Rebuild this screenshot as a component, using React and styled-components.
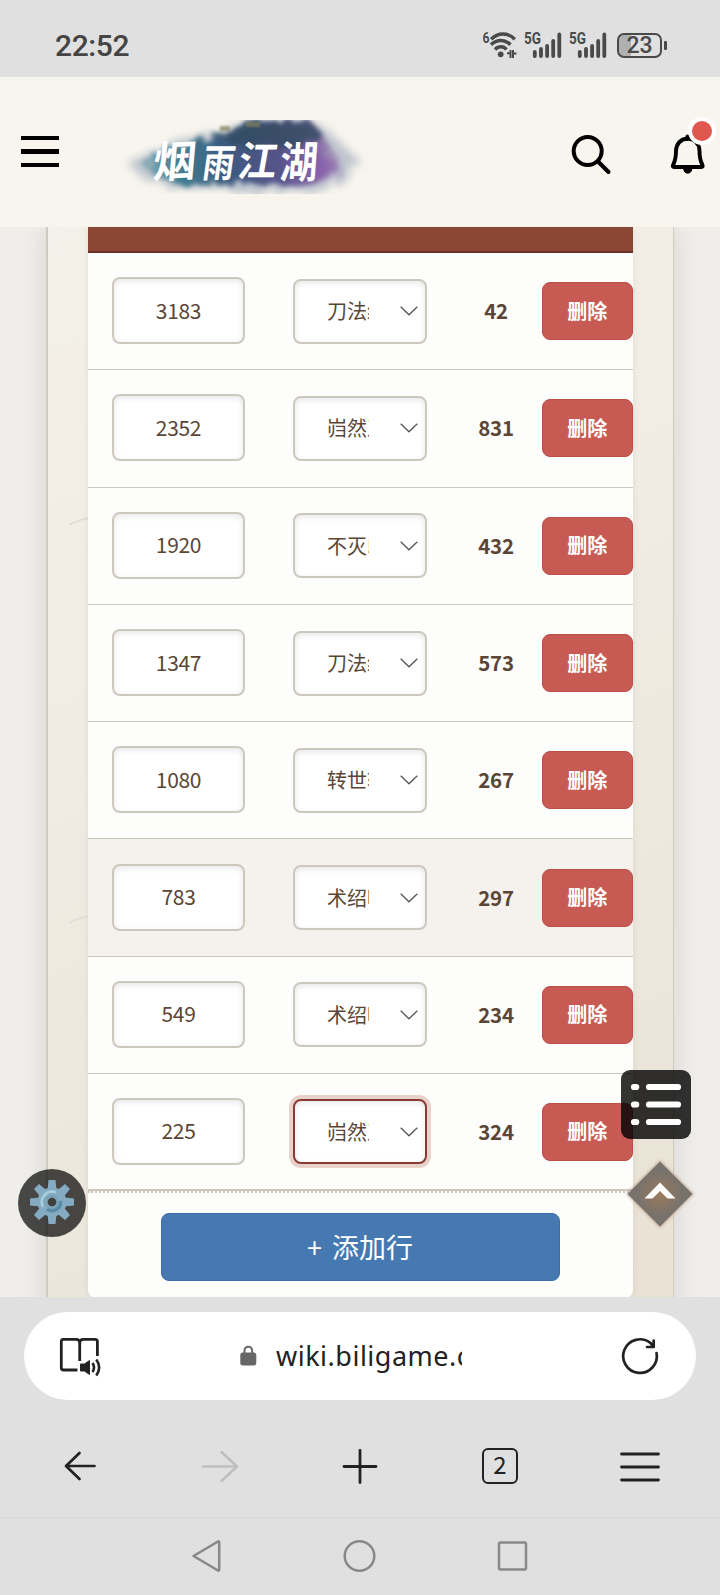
import React from 'react';
import styled, { createGlobalStyle } from 'styled-components';

const rowsData = [
  { id: 1, time: 3183, skill: '刀法绍', diff: 42 },
  { id: 2, time: 2352, skill: '岿然正', diff: 831 },
  { id: 3, time: 1920, skill: '不灭印', diff: 432 },
  { id: 4, time: 1347, skill: '刀法绍', diff: 573 },
  { id: 5, time: 1080, skill: '转世轮', diff: 267 },
  { id: 6, time: 783, skill: '术绍叩', diff: 297, active: true },
  { id: 7, time: 549, skill: '术绍叩', diff: 234 },
  { id: 8, time: 225, skill: '岿然正', diff: 324, focused: true },
];

const SignalIcon = () => (
  <svg width="38" height="28" viewBox="0 0 38 28">
    <text x="0" y="13" fontFamily="Roboto, sans-serif" fontWeight="700" fontSize="16.5" textLength="17" lengthAdjust="spacingAndGlyphs" fill="#4a4a4a">5G</text>
    <g stroke="#4a4a4a" strokeWidth="3.8" strokeLinecap="round">
      <path d="M10.8 21v4M17 18v7M23.1 15v10M29.2 10v15M35.3 3.5V25" />
    </g>
  </svg>
);

const WifiIcon = () => (
  <svg width="34" height="28" viewBox="0 0 34 28">
    <text x="-0.5" y="12" fontFamily="Roboto, sans-serif" fontWeight="700" fontSize="14.5" textLength="7" lengthAdjust="spacingAndGlyphs" fill="#4a4a4a">6</text>
    <g fill="none" stroke="#4a4a4a" strokeWidth="3.5">
      <path d="M8.2 8.2C15 1.200 25 1.200 31.800 8.200" />
      <path d="M8 13.600C14 8 21.500 8 27.500 13.600" />
      <path d="M12 18.500C15.500 14.800 20.500 14.800 23.500 18.500" />
    </g>
    <circle cx="17.700" cy="23.300" r="2.900" fill="#4a4a4a" />
    <path d="M24 22.300H27.500V19V27M30 19V27M30 22.500H33.500" fill="none" stroke="#4a4a4a" strokeWidth="2" />
  </svg>
);

const Logo = () => (
  <svg width="260" height="74" viewBox="0 0 260 74">
    <defs>
      <linearGradient id="ink" x1="0" x2="1">
        <stop offset="0" stopColor="#7fa5b4" />
        <stop offset="0.2" stopColor="#357588" />
        <stop offset="0.45" stopColor="#33517a" />
        <stop offset="0.7" stopColor="#514b86" />
        <stop offset="0.88" stopColor="#8063a3" />
        <stop offset="1" stopColor="#b1a7bd" />
      </linearGradient>
      <filter id="rough" x="-20%" y="-30%" width="140%" height="160%">
        <feTurbulence type="fractalNoise" baseFrequency="0.09" numOctaves="3" seed="4" result="n" />
        <feDisplacementMap in="SourceGraphic" in2="n" scale="16" />
        <feGaussianBlur stdDeviation="2.600" />
      </filter>
      <filter id="haze" x="-20%" y="-40%" width="140%" height="180%">
        <feTurbulence type="fractalNoise" baseFrequency="0.06" numOctaves="3" seed="8" result="n" />
        <feDisplacementMap in="SourceGraphic" in2="n" scale="20" />
        <feGaussianBlur stdDeviation="4.500" />
      </filter>
    </defs>
    <path d="M14 44L44 28L92 14L140 -2H192L218 14L234 30L248 42L226 58L200 74H140L70 68L34 62Z" fill="#8e9fb2" opacity="0.550" filter="url(#haze)" />
    <path d="M28 44L58 27L96 18L136 2H196L212 20L226 40L218 56L190 66L130 63L72 66L44 58Z" fill="url(#ink)" opacity="0.920" filter="url(#rough)" />
    <path d="M100 16L136 2H196L210 16L178 28L126 26Z" fill="#304c60" opacity="0.800" filter="url(#rough)" />
    <path d="M106 6h10v5h-10zM132 2h14v5h-14z" fill="#85835a" opacity="0.700" filter="blur(1px)" />
    <ellipse cx="207" cy="48" rx="17" ry="12" fill="#8557ad" opacity="0.650" filter="url(#haze)" />
    <g fill="#fff" fontFamily="'Noto Sans CJK SC', sans-serif" fontWeight="700">
      <text transform="translate(38 58) skewX(-8) rotate(-3)" fontSize="43">烟</text>
      <text transform="translate(87 57) skewX(-8) scale(.82 1)" fontSize="39">雨</text>
      <text transform="translate(122 56) skewX(-10) scale(.95 1)" fontSize="41">江</text>
      <text transform="translate(165 58) skewX(-4) scale(.86 1)" fontSize="44">湖</text>
    </g>
  </svg>
);

const SearchIcon = () => (
  <svg width="42" height="42" viewBox="0 0 42 42" fill="none" stroke="#000" strokeWidth="4" strokeLinecap="round">
    <circle cx="17.700" cy="17" r="14" />
    <path d="M28 27.500L38.500 38" />
  </svg>
);

const BellIcon = () => (
  <svg width="36" height="42" viewBox="0 0 36 42" fill="none" stroke="#000" strokeWidth="3.900" strokeLinejoin="round" strokeLinecap="round">
    <path d="M17.500 4.500C10.500 5 6 10 6 17C6 24 5.500 26.500 3 31.200C2.500 32.300 3 33 4 33H31.500C32.500 33 33 32.300 32.500 31.200C30 26.500 29.500 24 29.500 17C29.500 10 25 5 17.500 4.500Z" />
    <path d="M17.500 2.500V5" />
    <path d="M13.500 34.500A4.300 5.500 0 0 0 22 34.500Z" fill="#000" strokeWidth="1" />
  </svg>
);

const GearIcon = () => (
  <svg width="46" height="46" viewBox="-23 -23 46 46">
    <g fill="#84abc1">
      {[0, 45, 90, 135, 180, 225, 270, 315].map((deg) => (
        <path key={deg} d="M-4.500 -12L-3.500 -22H3.500L4.500 -12Z" transform={`rotate(${deg})`} />
      ))}
      <circle r="14.500" />
    </g>
    <path d="M-9.500 4A10.500 10.500 0 0 1 3 -10" fill="none" stroke="#a9d0de" strokeWidth="2.400" strokeLinecap="round" />
    <path d="M8.500 -1A8.500 8.500 0 0 1 -5 7" fill="none" stroke="#588ba7" strokeWidth="3.500" />
    <circle r="5.500" fill="none" stroke="#7ba2b7" strokeWidth="3" />
    <circle r="4.300" fill="#403f3d" />
  </svg>
);

const ReaderIcon = () => (
  <svg width="44" height="42" viewBox="0 0 44 42" fill="none" stroke="#222" strokeWidth="2.800" strokeLinecap="butt">
    <path d="M18.500 35H4.500Q2.300 35 2.300 32.800V6.500Q2.300 4.300 4.500 4.300H17Q20.700 4.300 20.700 8V26M20.700 8Q20.700 4.300 24.500 4.300H36Q38.400 4.300 38.400 6.500V21" />
    <path d="M21.500 29H25.500L30.500 25.500V39.500L25.500 36H21.500Z" fill="#222" strokeWidth="1" />
    <path d="M33.500 28Q36.500 32.500 33.500 37M37.300 24.500Q43 32.500 37.300 40.500" strokeWidth="2.600" />
  </svg>
);

const LockIcon = () => (
  <svg width="17" height="21" viewBox="0 0 17 21">
    <path d="M4.500 9V5.500a3.800 3.800 0 0 1 7.600 0V9" fill="none" stroke="#666" strokeWidth="2" />
    <rect x="0.300" y="7.500" width="16" height="13" rx="2.500" fill="#666" />
  </svg>
);

const ReloadIcon = () => (
  <svg width="40" height="40" viewBox="0 0 40 40" fill="none" stroke="#222" strokeWidth="2.700" strokeLinecap="round" strokeLinejoin="round">
    <path d="M36.500 17A16.800 16.800 0 1 1 30.500 7L33.500 10.500" />
    <path d="M33.700 4.500V11H27" />
  </svg>
);

const toolIcons = {
  back: (
    <svg width="40" height="40" viewBox="0 0 40 40" fill="none" stroke="#222" strokeWidth="2.700" strokeLinecap="round" strokeLinejoin="round">
      <path d="M34.500 20H6M19.500 7L6 20L19.500 33" />
    </svg>
  ),
  forward: (
    <svg width="40" height="40" viewBox="0 0 40 40" fill="none" stroke="#bfbfbf" strokeWidth="2.500" strokeLinecap="round" strokeLinejoin="round">
      <path d="M3 20.500H37M21.500 6L37 20.500L21.500 35" />
    </svg>
  ),
  add: (
    <svg width="40" height="40" viewBox="0 0 40 40" stroke="#222" strokeWidth="2.800" strokeLinecap="round">
      <path d="M4 20.500H36M20 4.500V36.500" />
    </svg>
  ),
  menu: (
    <svg width="40" height="40" viewBox="0 0 40 40" stroke="#222" strokeWidth="2.800" strokeLinecap="round">
      <path d="M1.500 8H38.500M1.500 21H38.500M1.500 34H38.500" />
    </svg>
  ),
};

const App = () => {
  return (
    <>
      <GlobalStyle />
      <Screen>
        <StatusBar>
          <Clock>22:52</Clock>
          <StatusIcons>
            <WifiIcon />
            <SignalIcon />
            <SignalIcon />
            <Battery>23</Battery>
          </StatusIcons>
        </StatusBar>

        <SiteHeader>
          <MenuLines><i /><i /><i /></MenuLines>
          <LogoLink><Logo /></LogoLink>
          <HeaderActions>
            <SearchIcon />
            <BellWrap>
              <BellIcon />
              <Badge />
            </BellWrap>
          </HeaderActions>
        </SiteHeader>

        <Content>
          <Panel>
            <Swirl $top={290} viewBox="0 0 24 10"><path d="M1 8Q11 2 24 1" /></Swirl>
            <Swirl $top={688} viewBox="0 0 24 10"><path d="M1 8Q11 2 24 1" /></Swirl>
            <Table>
              <TableHead>
                <span />
                <span />
                <span>间隔</span>
                <span>操作</span>
              </TableHead>
              {rowsData.map((row) => (
                <Row key={row.id} $active={row.active}>
                  <Cell><NumberInput>{row.time}</NumberInput></Cell>
                  <Cell>
                    <Select $focused={row.focused}>
                      <SelectText>{row.skill}</SelectText>
                      <svg width="18" height="10" viewBox="0 0 18 10" fill="none" stroke="#555" strokeWidth="1.300">
                        <path d="M0.700 0.700L9 8.800L17.300 0.700" />
                      </svg>
                    </Select>
                  </Cell>
                  <Diff>{row.diff}</Diff>
                  <DeleteButton>删除</DeleteButton>
                </Row>
              ))}
              <TableFooter>
                <AddButton>+ 添加行</AddButton>
              </TableFooter>
            </Table>
          </Panel>

          <SettingsButton><GearIcon /></SettingsButton>
          <TocButton>
            <svg width="52" height="44" viewBox="0 0 52 44" stroke="#fff" strokeWidth="6.200" strokeLinecap="round">
              <path d="M4 5H6.200M19 5H48M4 22.500H6.200M19 22.500H48M4 40H6.200M19 40H48" />
            </svg>
          </TocButton>
          <TopButton viewBox="-36 -36 72 72">
            <defs>
              <radialGradient id="glow">
                <stop offset="0" stopColor="#98785c" />
                <stop offset="0.7" stopColor="#736f69" />
              </radialGradient>
            </defs>
            <path d="M0 -34L34 0L0 34L-34 0Z" fill="#b08a74" opacity="0.600" filter="blur(1.5px)" />
            <path d="M0 -32.500L32.500 0L0 32.500L-32.500 0Z" fill="url(#glow)" opacity="0.950" />
            <path d="M-15.500 4.500L0 -11.500L15.500 4.500H7.500L0 -3L-7.500 4.500Z" fill="#fff" />
          </TopButton>
        </Content>

        <BrowserBar>
          <AddressBar>
            <ReaderIcon />
            <Address>
              <LockIcon />
              <Url>wiki.biligame.com</Url>
            </Address>
            <ReloadIcon />
          </AddressBar>
          <Toolbar>
            <Tool>{toolIcons.back}</Tool>
            <Tool>{toolIcons.forward}</Tool>
            <Tool>{toolIcons.add}</Tool>
            <Tool><TabCount>2</TabCount></Tool>
            <Tool>{toolIcons.menu}</Tool>
          </Toolbar>
        </BrowserBar>

        <SystemNav>
          <svg width="34" height="34" viewBox="0 0 34 34"><path d="M3.500 17L28 2.500Q29.200 2 29.200 3.500V30.500Q29.200 32 28 31.500Z" /></svg>
          <svg width="34" height="34" viewBox="0 0 34 34"><circle cx="16.500" cy="17" r="14.800" /></svg>
          <svg width="34" height="34" viewBox="0 0 34 34"><rect x="3" y="3.500" width="27" height="27" rx="1.500" /></svg>
        </SystemNav>
      </Screen>
    </>
  );
};

export default App;

// Styled Components
const GlobalStyle = createGlobalStyle`
  * {
    box-sizing: border-box;
  }

  body {
    margin: 0;
    font-family: 'Noto Sans CJK SC', sans-serif;
  }

  svg {
    display: block;
    flex-shrink: 0;
  }
`;

const Screen = styled.div`
  display: flex;
  flex-direction: column;
  width: 720px;
  height: 1595px;
  overflow: hidden;
  background: #e0e0e0;
`;

const StatusBar = styled.div`
  display: flex;
  align-items: center;
  justify-content: space-between;
  height: 77px;
  padding: 13px 53px 0 55px;
  flex-shrink: 0;
`;

const Clock = styled.div`
  font-family: Roboto, sans-serif;
  font-size: 30px;
  font-weight: 500;
  letter-spacing: -0.4px;
  color: #444;
`;

const StatusIcons = styled.div`
  display: flex;
  align-items: center;
  gap: 7px;
`;

const Battery = styled.div`
  position: relative;
  display: flex;
  align-items: center;
  justify-content: center;
  width: 45px;
  height: 25px;
  margin: 0 5px 0 3px;
  border: 2px solid #4a4a4a;
  border-radius: 7px;
  background: linear-gradient(90deg, #b0b0b0 30%, #e0e0e0 30%);
  font-family: Roboto, sans-serif;
  font-size: 23px;
  font-weight: 500;
  color: #4a4a4a;

  &::after {
    content: '';
    position: absolute;
    right: -7px;
    top: 6px;
    width: 3px;
    height: 9px;
    border-radius: 1px;
    background: #4a4a4a;
  }
`;

const SiteHeader = styled.header`
  display: flex;
  align-items: center;
  height: 150px;
  padding: 0 14px 0 21px;
  background: #f8f5ee;
  flex-shrink: 0;
`;

const MenuLines = styled.div`
  display: flex;
  flex-direction: column;
  gap: 9px;
  margin-top: -1px;

  i {
    width: 38px;
    height: 4.5px;
    background: #000;
  }
`;

const LogoLink = styled.div`
  margin: 9px 0 0 55px;
`;

const HeaderActions = styled.div`
  display: flex;
  gap: 58px;
  margin: 5px 0 0 auto;
`;

const BellWrap = styled.div`
  position: relative;
`;

const Badge = styled.span`
  position: absolute;
  top: -17px;
  right: -10px;
  width: 28px;
  height: 28px;
  border: 4px solid #fff;
  border-radius: 50%;
  background: #e0574f;
`;

const Content = styled.main`
  position: relative;
  height: 1069.5px;
  overflow: hidden;
  background: #efeeeb;
  flex-shrink: 0;
`;

const Panel = styled.section`
  position: relative;
  width: 628px;
  height: 1100px;
  margin-left: 46px;
  padding: 0 39.5px 0 40px;
  border: solid #cfcabf;
  border-width: 0 1.5px 0 2px;
  background: linear-gradient(155deg, #f4f1ea, #f0ebe2 45%, #ebe7da 75%, #e9e1d4);
  box-shadow: 0 0 24px rgba(60, 60, 60, 0.14);
`;

const Swirl = styled.svg`
  position: absolute;
  top: ${(props) => props.$top}px;
  left: 20px;
  width: 24px;
  height: 10px;
  fill: none;
  stroke: #e0dbd3;
  stroke-width: 1.5;
`;

const Table = styled.div`
  position: relative;
  width: 545px;
  height: 1071px;
  overflow: hidden;
  border-radius: 0 0 8px 8px;
  background: #fdfdfb;
  box-shadow: 0 0 6px rgba(90, 70, 50, 0.1);
`;

const TableHead = styled.div`
  display: grid;
  grid-template-columns: 181px 181.5px 91px 1fr;
  align-items: center;
  height: 66px;
  margin-top: -40px;
  padding-bottom: 5px;
  border-bottom: 2px solid #6a3026;
  background: #8b4634;
  font-size: 20px;
  font-weight: 700;
  text-align: center;
  color: #65301f;
`;

const Row = styled.div`
  display: grid;
  grid-template-columns: 181px 181.5px 91px 1fr;
  align-items: center;
  height: 117.3px;
  border-bottom: 1.5px solid #cdc8be;
  background: ${(props) => (props.$active ? '#f5f2ee' : 'transparent')};

  &:nth-last-child(2) {
    border-bottom-width: 2px;
  }
`;

const Cell = styled.div`
  padding: 0 24px;
`;

const NumberInput = styled.div`
  display: flex;
  align-items: center;
  justify-content: center;
  width: 133px;
  height: 67px;
  margin-top: -1px;
  padding-bottom: 2px;
  border: 2px solid #cdc8be;
  border-radius: 8px;
  background: #fff;
  box-shadow: inset 0 2px 6px rgba(0, 0, 0, 0.1);
  font-size: 21px;
  letter-spacing: -0.3px;
  color: #5b4636;
`;

const Select = styled.div`
  display: flex;
  align-items: center;
  justify-content: space-between;
  width: 134px;
  height: 65px;
  padding: 0 7px 0 32px;
  border: 2px solid ${(props) => (props.$focused ? '#8a3a34' : '#cdc8be')};
  border-radius: 8px;
  background: #fff;
  box-shadow: ${(props) => (props.$focused ? '0 0 0 4px #e8d3cb, ' : '')}inset 0 2px 6px rgba(0, 0, 0, 0.1);
`;

const SelectText = styled.span`
  width: 42px;
  overflow: hidden;
  white-space: nowrap;
  font-size: 20px;
  line-height: 30px;
  color: #5b4636;
`;

const Diff = styled.div`
  padding-bottom: 2px;
  font-size: 20.5px;
  font-weight: 700;
  text-align: center;
  letter-spacing: -0.3px;
  color: #5b4636;
`;

const DeleteButton = styled.button`
  width: 91.5px;
  height: 58px;
  padding: 0 0 2px;
  border: 1px solid #bd4f49;
  border-radius: 8px;
  background: #c85a54;
  font-family: inherit;
  font-size: 20px;
  font-weight: 700;
  color: #fff;
`;

const TableFooter = styled.div`
  display: flex;
  justify-content: center;
  padding-top: 20px;
  border-top: 2px dotted #cdc8be;
`;

const AddButton = styled.button`
  width: 399px;
  height: 68px;
  margin-right: 1px;
  padding: 0 0 2px;
  border: 1px solid #3c6da6;
  border-radius: 8px;
  background: #4678b2;
  font-family: inherit;
  font-size: 27px;
  word-spacing: 4px;
  color: #fff;
`;

const SettingsButton = styled.div`
  position: absolute;
  left: 18px;
  top: 942px;
  display: flex;
  align-items: center;
  justify-content: center;
  width: 68px;
  height: 68px;
  padding-bottom: 2px;
  border-radius: 50%;
  background: rgba(0, 0, 0, 0.7);
`;

const TocButton = styled.div`
  position: absolute;
  left: 621px;
  top: 842.5px;
  display: flex;
  align-items: center;
  justify-content: center;
  width: 70px;
  height: 69.5px;
  border-radius: 9px;
  background: rgba(0, 0, 0, 0.8);
`;

const TopButton = styled.svg`
  position: absolute;
  left: 623.5px;
  top: 931px;
  width: 72px;
  height: 72px;
`;

const BrowserBar = styled.div`
  display: flex;
  flex-direction: column;
  height: 221px;
  padding-top: 15.5px;
  border-bottom: 1px solid #d6d6d6;
  flex-shrink: 0;
`;

const AddressBar = styled.div`
  display: flex;
  align-items: center;
  justify-content: space-between;
  width: 672px;
  height: 87.5px;
  margin: 0 auto;
  padding: 0 36px 0 35px;
  border-radius: 44px;
  background: #fff;
`;

const Address = styled.div`
  display: flex;
  align-items: center;
  gap: 19px;
  margin-left: -21px;
`;

const Url = styled.div`
  width: 186px;
  overflow: hidden;
  white-space: nowrap;
  font-family: 'Noto Sans', sans-serif;
  font-size: 27px;
  letter-spacing: 0.5px;
  color: #222;
`;

const Toolbar = styled.div`
  display: grid;
  grid-template-columns: repeat(5, 140px);
  justify-content: center;
  align-items: center;
  flex: 1;
  padding-top: 15px;
`;

const Tool = styled.div`
  display: flex;
  justify-content: center;
`;

const TabCount = styled.div`
  display: flex;
  align-items: center;
  justify-content: center;
  width: 36px;
  height: 36px;
  border: 2.7px solid #222;
  border-radius: 6px;
  font-size: 24px;
  line-height: 30px;
  padding-bottom: 3px;
  color: #222;
`;

const SystemNav = styled.div`
  display: flex;
  align-items: center;
  justify-content: center;
  gap: 119px;
  flex: 1;

  svg {
    fill: none;
    stroke: #888;
    stroke-width: 2.5;
    stroke-linejoin: round;
  }
`;
